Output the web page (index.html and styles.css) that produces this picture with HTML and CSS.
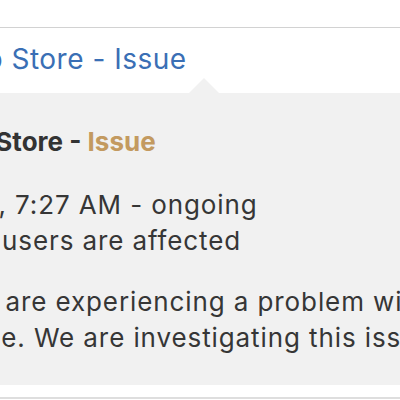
FILE: index.html
```html
<!DOCTYPE html>
<html>
<head>
<meta charset="utf-8">
<link rel="stylesheet" href="styles.css">
</head>
<body>
<div class="page">
  <div class="topbar"></div>
  <a class="link">App Store - Issue</a>
  <div class="popover">
    <div class="title">App Store - <span class="issue">Issue</span></div>
    <div class="info">
      <div class="when">Today, 7:27 AM - ongoing</div>
      <div class="who">Some users are affected</div>
    </div>
    <div class="desc">
      <div class="l1">Users are experiencing a problem with this</div>
      <div class="l2">service. We are investigating this issue.</div>
    </div>
  </div>
  <div class="bottombar"></div>
</div>
</body>
</html>
```
FILE: styles.css
```css
html, body {
  margin: 0;
  padding: 0;
  background: #ffffff;
  overflow: hidden;
  width: 400px;
  height: 400px;
}
.page {
  font-family: Inter, "Noto Sans", sans-serif;
  color: #363636;
  display: flex;
  flex-direction: column;
  white-space: nowrap;
}
.topbar {
  height: 27px;
  border-bottom: 1px solid #d2d2d2;
}
.link {
  display: block;
  margin-top: 14px;
  margin-left: -52px;
  font-size: 28px;
  line-height: 34px;
  letter-spacing: 0.5px;
  color: #3a6fb5;
}
.popover {
  position: relative;
  margin-top: 17px;
  background: #f1f1f1;
  padding: 33px 0 29px 0;
}
.popover::before {
  content: "";
  position: absolute;
  top: -15px;
  left: 189px;
  width: 0;
  height: 0;
  border-left: 15px solid transparent;
  border-right: 15px solid transparent;
  border-bottom: 15px solid #f1f1f1;
}
.title {
  margin-left: -63px;
  font-size: 26px;
  line-height: 32px;
  font-weight: 700;
  color: #333333;
}
.issue {
  color: #c39a60;
}
.info {
  margin-top: 29px;
  margin-left: -80px;
  font-size: 26px;
  line-height: 36px;
  letter-spacing: 0.9px;
}
.desc {
  margin-top: 25px;
  margin-left: -79px;
  font-size: 26px;
  line-height: 36px;
  letter-spacing: 0.9px;
}
.bottombar {
  margin-top: 12px;
  border-top: 2px solid #dedede;
}
```
